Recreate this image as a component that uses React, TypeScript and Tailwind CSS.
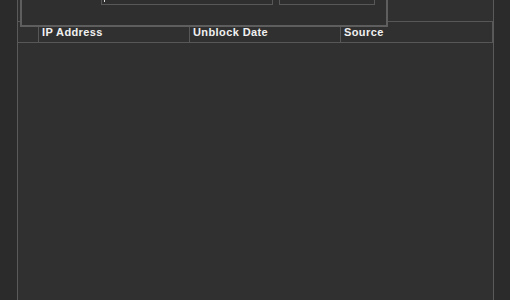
import React from 'react';

const columns = ['IP Address', 'Unblock Date', 'Source'];

export default function App() {
  return (
    <div
      className="relative flex h-[300px] w-[510px] overflow-hidden bg-[#2e2e2e] text-[11px] text-[#f0f0f0]"
      style={{ fontFamily: '"Liberation Sans", Arial, sans-serif' }}
    >
      <div className="w-[17px] shrink-0 bg-[#2b2b2b]" />
      <div className="flex w-[477px] shrink-0 flex-col border-x border-[#5a5a5a] bg-[#303030] pt-[21px]">
        <div className="flex h-[22px] w-[475px] border-y border-r border-[#575757]">
          <div className="w-[21px] shrink-0 border-r border-[#575757]" />
          {columns.map((c, i) => (
            <div
              key={c}
              className={
                'flex w-[151px] shrink-0 items-center pl-[3px] font-bold tracking-[0.4px] ' +
                (i < 2 ? 'border-r border-[#575757]' : 'grow')
              }
            >
              {c}
            </div>
          ))}
        </div>
      </div>
      <div className="grow bg-[#2b2b2b]" />

      {/* dialog overlapping the table header */}
      <div className="absolute left-[20px] top-[-30px] h-[57px] w-[368px] border-2 border-[#5e5e5e] bg-[#2f2f2f]">
        <div className="flex pl-[79px] pt-[10px]">
          <div className="relative h-[23px] w-[172px] border border-[#585858]">
            <span className="absolute bottom-[2px] left-[2px] h-[3px] w-px bg-[#dddddd]" />
          </div>
          <div className="ml-[6px] h-[23px] w-[96px] border border-[#585858]" />
        </div>
      </div>
    </div>
  );
}
